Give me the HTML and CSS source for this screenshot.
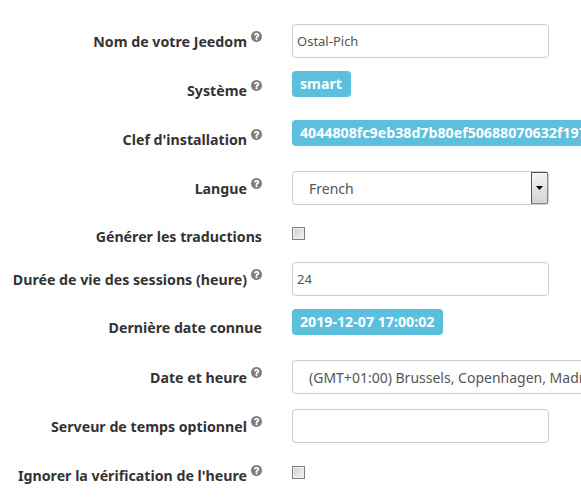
FILE: index.html
```html
<!DOCTYPE html>
<html lang="fr">
<head>
<meta charset="utf-8">
<title>Configuration</title>
<link rel="stylesheet" href="styles.css">
</head>
<body>
<svg class="defs" width="0" height="0" aria-hidden="true"><symbol id="q" viewBox="0 128 1536 1536"><path d="M896 1376v-192q0-14-9-23t-23-9h-192q-14 0-23 9t-9 23v192q0 14 9 23t23 9h192q14 0 23-9t9-23zm256-672q0-88-55.500-163t-138.500-116-170-41q-243 0-371 213-15 24 8 42l132 100q7 6 19 6 16 0 25-12 53-68 86-92 34-24 86-24 48 0 85.500 26t37.500 59q0 38-20 61t-68 45q-63 28-115.500 86.500t-52.500 125.500v36q0 14 9 23t23 9h192q14 0 23-9t9-23q0-19 21.500-49.500t54.500-49.500q32-18 49-28.500t46-35 44.500-48 28-60.500 12.500-81zm384 192q0 209-103 385.500t-279.500 279.500-385.500 103-385.500-103-279.500-279.500-103-385.500 103-385.500 279.500-279.500 385.500-103 385.500 103 279.500 279.500 103 385.500z"/></symbol></svg>
<form class="form">
  <div class="row">
    <label class="label">Nom de votre Jeedom<svg class="help"><use href="#q"/></svg></label>
    <div class="value"><input class="input" type="text" value="Ostal-Pich"></div>
  </div>
  <div class="row">
    <label class="label">Système<svg class="help"><use href="#q"/></svg></label>
    <div class="value"><span class="badge">smart</span></div>
  </div>
  <div class="row">
    <label class="label">Clef d'installation<svg class="help"><use href="#q"/></svg></label>
    <div class="value"><span class="badge">4044808fc9eb38d7b80ef50688070632f197a3c1d5e2</span></div>
  </div>
  <div class="row">
    <label class="label">Langue<svg class="help"><use href="#q"/></svg></label>
    <div class="value select-wrap">
      <select class="select"><option>French</option></select>
      <span class="arrow"><svg width="7" height="4" viewBox="0 0 7 4"><path d="M0 0h7L3.500 4z"/></svg></span>
    </div>
  </div>
  <div class="row row-short">
    <label class="label">Générer les traductions</label>
    <div class="value"><span class="check"></span></div>
  </div>
  <div class="row">
    <label class="label">Durée de vie des sessions (heure)<svg class="help"><use href="#q"/></svg></label>
    <div class="value"><input class="input" type="text" value="24"></div>
  </div>
  <div class="row">
    <label class="label">Dernière date connue</label>
    <div class="value"><span class="badge">2019-12-07 17:00:02</span></div>
  </div>
  <div class="row">
    <label class="label">Date et heure<svg class="help"><use href="#q"/></svg></label>
    <div class="value select-wrap">
      <select class="select select-wide"><option>(GMT+01:00) Brussels, Copenhagen, Madrid, Paris</option></select>
    </div>
  </div>
  <div class="row">
    <label class="label">Serveur de temps optionnel<svg class="help"><use href="#q"/></svg></label>
    <div class="value"><input class="input" type="text"></div>
  </div>
  <div class="row">
    <label class="label">Ignorer la vérification de l'heure<svg class="help"><use href="#q"/></svg></label>
    <div class="value"><span class="check check-low"></span></div>
  </div>
</form>
</body>
</html>
```
FILE: styles.css
```css
html, body {
  margin: 0;
  height: 100%;
  overflow: hidden;
  background: #fff;
}
body {
  font-family: "Noto Sans", "Open Sans", sans-serif;
  font-size: 14.2px;
  line-height: 20px;
  color: #555;
}
.defs { position: absolute; }
.form {
  display: flex;
  flex-direction: column;
  gap: 15px;
  padding-top: 24px;
}
.row {
  display: grid;
  grid-template-columns: 262px 1fr;
  column-gap: 30px;
  height: 34px;
}
.row-short { height: 27px; }
.label {
  display: block;
  padding-top: 7px;
  text-align: right;
  font-weight: 700;
  color: #333;
  white-space: nowrap;
}
.help {
  width: 11px;
  height: 11px;
  margin-left: 4px;
  vertical-align: 5px;
  fill: #807d7d;
}
.value {
  min-width: 0;
  white-space: nowrap;
}
.input {
  box-sizing: border-box;
  display: block;
  width: 257px;
  height: 34px;
  padding: 6px 4px;
  border: 1px solid #ccc;
  border-radius: 4px;
  background: #fff;
  font: 13px/20px "Noto Sans", "Open Sans", sans-serif;
  color: #555;
  outline: none;
}
.badge {
  display: block;
  width: fit-content;
  margin-top: -2px;
  padding: 3px 9px 3px 8px;
  border-radius: 4px;
  background: #5bc0de;
  color: #fff;
  font-weight: 700;
  line-height: 20px;
}
.select-wrap { position: relative; }
.select {
  box-sizing: border-box;
  display: block;
  width: 257px;
  height: 34px;
  padding: 2px 16px 0;
  border: 1px solid #ccc;
  border-radius: 4px;
  background: #fff;
  font: 14px/20px "Noto Sans", "Open Sans", sans-serif;
  color: #555;
  appearance: none;
  outline: none;
}
.select-wide { width: 400px; }
.arrow {
  box-sizing: border-box;
  position: absolute;
  left: 239px;
  top: 1px;
  width: 17px;
  height: 32px;
  display: flex;
  align-items: center;
  justify-content: center;
  border: 1px solid #555;
  border-right-color: #888;
  border-bottom-color: #888;
  background: linear-gradient(#f4f4f4, #d4d4d4);
}
.check {
  box-sizing: border-box;
  display: block;
  width: 13px;
  height: 13px;
  margin-top: 7px;
  border: 1px solid #808080;
  background: linear-gradient(135deg, #cfcfcf, #f4f4f4);
  box-shadow: inset 0 0 0 1px #eee;
}
.check-low { margin-top: 8px; }
```
